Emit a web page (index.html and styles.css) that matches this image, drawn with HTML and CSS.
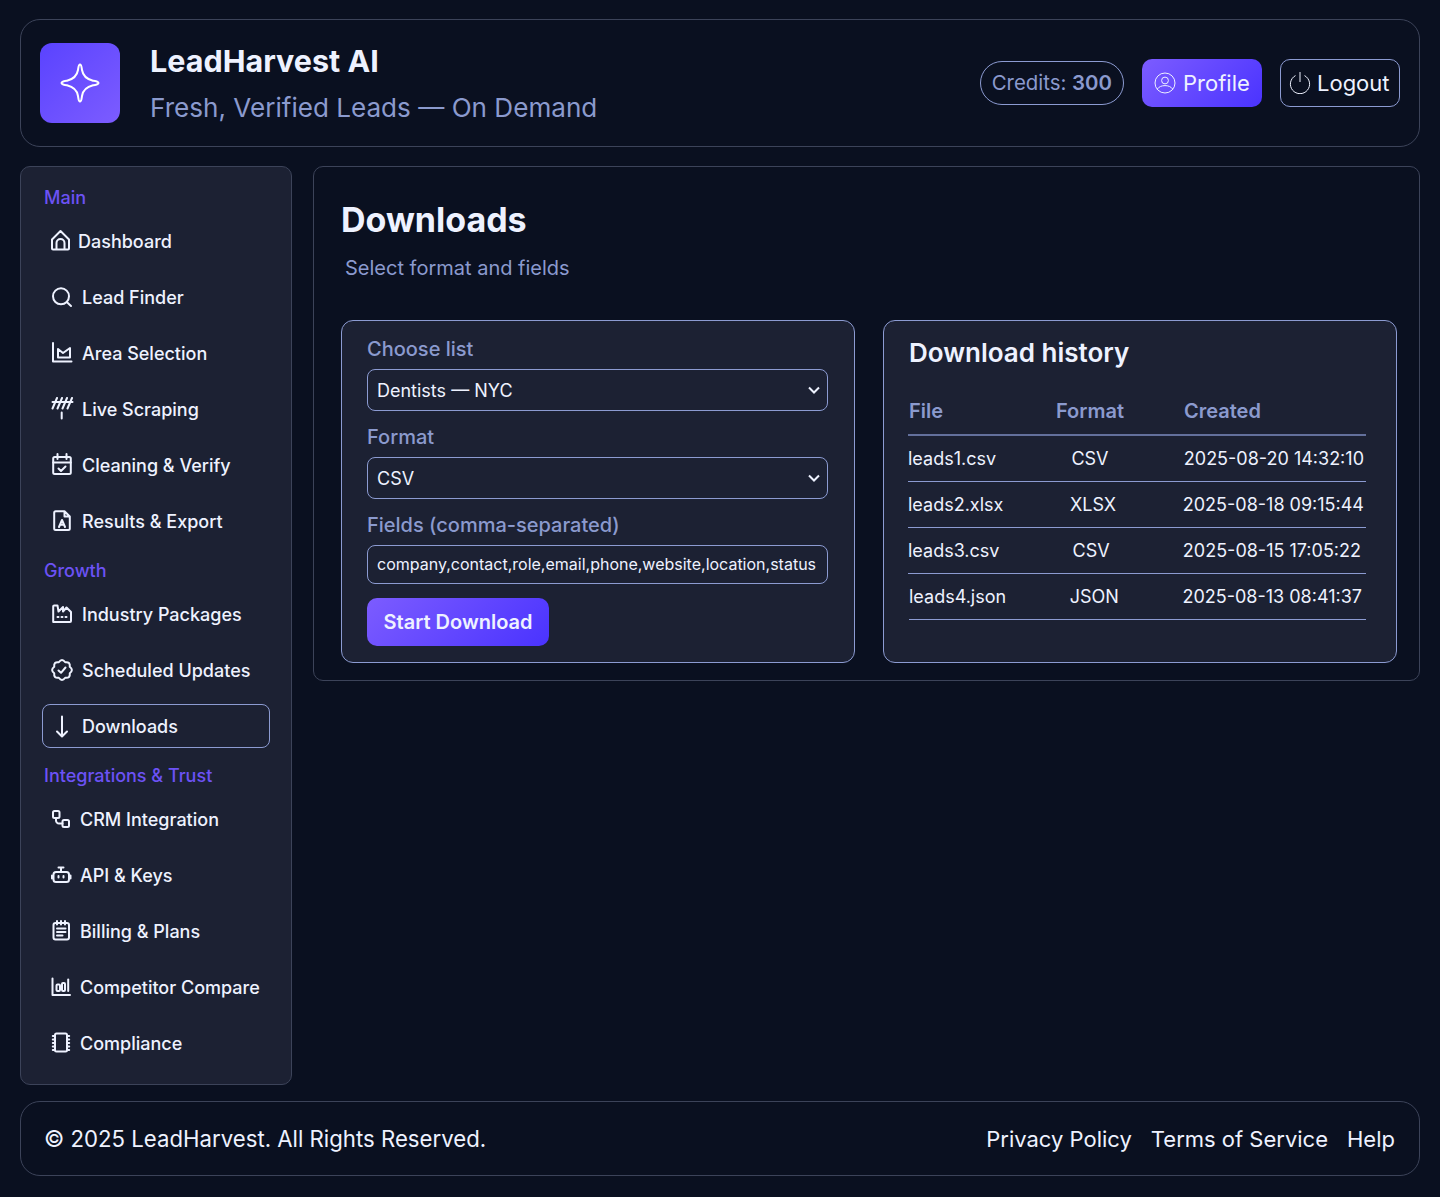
FILE: index.html
```html
<!DOCTYPE html>
<html lang="en">
<head>
  <meta charset="UTF-8" />
  <meta name="viewport" content="width=device-width, initial-scale=1.0"/>
  <title>LeadHarvest AI - Downloads</title>
  <link rel="stylesheet" href="styles.css">
</head>
<body>
  <header class="topbar">
    <div class="brand">
      <div class="logo">
        <svg viewBox="0 0 40 40" width="40" height="40" fill="none" stroke="#fff" stroke-width="2" stroke-linejoin="round">
          <path d="M20 1.5C21.5 1.5 21.5 4 22 7C23 13 26 16 33 17.7C36 18.2 38.5 18.5 38.5 20C38.5 21.5 36 21.8 33 22.3C26 24 23 27 22 33C21.5 36 21.5 38.5 20 38.5C18.5 38.5 18.5 36 18 33C17 27 14 24 7 22.3C4 21.8 1.5 21.5 1.5 20C1.5 18.5 4 18.2 7 17.7C14 16 17 13 18 7C18.5 4 18.5 1.5 20 1.5Z"/>
        </svg>
      </div>
      <div class="brand-text">
        <h1>LeadHarvest AI</h1>
        <p>Fresh, Verified Leads — On Demand</p>
      </div>
    </div>
    <div class="top-actions">
      <span class="credits">Credits: <b>300</b></span>
      <a class="btn btn-primary" href="#">
        <svg viewBox="0 0 22 22" width="22" height="22" fill="none" stroke="currentColor" stroke-width="1">
          <circle cx="11" cy="11" r="10"/>
          <circle cx="11" cy="8.5" r="3.4"/>
          <path d="M3.2 17.2C5 14.6 7.8 13.6 11 13.6s6 1 7.8 3.6"/>
        </svg>
        Profile
      </a>
      <a class="btn btn-outline" href="#">
        <svg viewBox="0 0 22 22" width="22" height="22" fill="none" stroke="currentColor" stroke-width="1">
          <path d="M6.5 3.6A9.6 9.6 0 1 0 15.5 3.6"/>
          <path d="M11 0v10"/>
        </svg>
        Logout
      </a>
    </div>
  </header>

  <div class="layout">
    <nav class="sidebar">
      <div class="nav-label">Main</div>
      <a class="nav-item" href="#">
        <svg class="ico ico-sm" viewBox="0 0 20 24"><path d="M2 10.5L10.5 2L19 10.5V19.5A1 1 0 0 1 18 20.5H3A1 1 0 0 1 2 19.5ZM6.5 20.5V14a4 4 0 0 1 8 0V20.5"/></svg>
        Dashboard
      </a>
      <a class="nav-item" href="#">
        <svg class="ico" viewBox="0 0 24 24"><circle cx="11" cy="11.3" r="8"/><path d="M17 17.3L21 21"/></svg>
        Lead Finder
      </a>
      <a class="nav-item" href="#">
        <svg class="ico" viewBox="0 0 24 24"><path d="M3 2V20.5H21.5M8 16.5V8l5 4 7-5V16.5Z"/></svg>
        Area Selection
      </a>
      <a class="nav-item" href="#">
        <svg class="ico" viewBox="0 0 24 24"><path d="M2.5 11.5L7 1M7.5 11.5L12 1M12.5 11.5L17 1M17.5 11.5L22 1M2.5 5H22.5M11.7 15.5V21.5"/></svg>
        Live Scraping
      </a>
      <a class="nav-item" href="#">
        <svg class="ico" viewBox="0 0 24 24"><rect x="3.2" y="4" width="17.6" height="17" rx="1.5"/><path d="M3.2 9.5H20.8M7.5 1V6M16.5 1V6M8.5 15.5L11 18L15.5 13.5"/></svg>
        Cleaning &amp; Verify
      </a>
      <a class="nav-item" href="#">
        <svg class="ico" viewBox="0 0 24 24"><path d="M4.2 3.7A1.5 1.5 0 0 1 5.7 2.2H14.5L19.8 7.5V19.5A1.5 1.5 0 0 1 18.3 21H5.7A1.5 1.5 0 0 1 4.2 19.5ZM14.5 2.2V7.5H19.8M9 18L12 11L15 18M10 15.8H14"/></svg>
        Results &amp; Export
      </a>

      <div class="nav-label nav-label-next">Growth</div>
      <a class="nav-item" href="#">
        <svg class="ico" viewBox="0 0 24 24"><path d="M3.2 20V4.5A1 1 0 0 1 4.2 3.5H7.5L8.5 9.5L13 5V9.5L16.5 5.5L21 10V19A1 1 0 0 1 20 20ZM7.5 15H8.5M11.5 15H12.5M15.5 15H16.5"/></svg>
        Industry Packages
      </a>
      <a class="nav-item" href="#">
        <svg class="ico" viewBox="0 0 24 24"><path d="M19.76 8.79Q24 12 19.76 15.21Q20.49 20.49 15.21 19.76Q12 24 8.79 19.76Q3.51 20.49 4.24 15.21Q0 12 4.24 8.79Q3.51 3.51 8.79 4.24Q12 0 15.21 4.24Q20.49 3.51 19.76 8.79ZM8.5 12.5L11 14.8L15.5 9.5"/></svg>
        Scheduled Updates
      </a>
      <a class="nav-item active" href="#">
        <svg class="ico" viewBox="0 0 24 24"><path d="M12 2.5V22M7 17.5L12 22.5L17 17.5"/></svg>
        Downloads
      </a>

      <div class="nav-label nav-label-next">Integrations &amp; Trust</div>
      <a class="nav-item" href="#">
        <svg class="ico ico-md" viewBox="0 0 22 22"><rect x="3" y="3" width="6.5" height="7" rx="1.5"/><rect x="12.5" y="12" width="6.5" height="7" rx="1.5"/><path d="M6 10V12.5A3 3 0 0 0 9 15.5H12.5"/></svg>
        CRM Integration
      </a>
      <a class="nav-item" href="#">
        <svg class="ico ico-md" viewBox="0 0 22 22"><rect x="3.5" y="8" width="15.5" height="10" rx="2.5"/><path d="M11 8V4M8.5 3.5H13.5M2 11.5V14.5M20.5 11.5V14.5M8.5 12V13.5M13.5 12V13.5"/></svg>
        API &amp; Keys
      </a>
      <a class="nav-item" href="#">
        <svg class="ico ico-md" viewBox="0 0 22 22"><rect x="3.5" y="3" width="15.5" height="16.5" rx="2"/><path d="M7 1V4.5M11 1V4.5M15 1V4.5M7 8.5H15.5M7 12H15.5M7 15.5H12.5"/></svg>
        Billing &amp; Plans
      </a>
      <a class="nav-item" href="#">
        <svg class="ico ico-md" viewBox="0 0 22 22"><path d="M2.5 2.5V19H20"/><rect x="6.5" y="8.5" width="3.5" height="6.5" rx="1"/><rect x="12" y="7" width="3" height="8" rx="1"/><path d="M18.2 3.5V15"/></svg>
        Competitor Compare
      </a>
      <a class="nav-item" href="#">
        <svg class="ico ico-md" viewBox="0 0 22 22"><rect x="5" y="1.5" width="12" height="18" rx="1.5"/><path d="M2.8 4H5M2.8 7.5H5M2.8 11H5M2.8 14.5H5M2.8 18H5M17 4H19.2M17 7.5H19.2M17 11H19.2M17 14.5H19.2M17 18H19.2"/></svg>
        Compliance
      </a>
    </nav>

    <main class="content">
      <h2>Downloads</h2>
      <p class="subtitle">Select format and fields</p>

      <div class="cards">
        <section class="card card-form">
          <label class="field-label" for="listSelect">Choose list</label>
          <select id="listSelect" class="field field-select">
            <option>Dentists — NYC</option>
          </select>
          <label class="field-label" for="formatSelect">Format</label>
          <select id="formatSelect" class="field field-select">
            <option>CSV</option>
          </select>
          <label class="field-label" for="fieldsInput">Fields (comma-separated)</label>
          <input id="fieldsInput" class="field field-input" type="text" value="company,contact,role,email,phone,website,location,status">
          <button class="start-btn" type="button">Start Download</button>
        </section>

        <section class="card card-history">
          <h3>Download history</h3>
          <div class="history-head">
            <span>File</span>
            <span>Format</span>
            <span>Created</span>
          </div>
          <div class="history-row"><span>leads1.csv</span><span>CSV</span><span>2025-08-20 14:32:10</span></div>
          <div class="history-row"><span>leads2.xlsx</span><span>XLSX</span><span>2025-08-18 09:15:44</span></div>
          <div class="history-row history-short"><span>leads3.csv</span><span>CSV</span><span>2025-08-15 17:05:22</span></div>
          <div class="history-row history-last"><span>leads4.json</span><span>JSON</span><span>2025-08-13 08:41:37</span></div>
        </section>
      </div>
    </main>
  </div>

  <footer class="footer">
    <span>© 2025 LeadHarvest. All Rights Reserved.</span>
    <div class="footer-links">
      <a href="#">Privacy Policy</a>
      <a href="#">Terms of Service</a>
      <a href="#">Help</a>
    </div>
  </footer>
</body>
</html>
```

FILE: styles.css
```css
* {
  margin: 0;
  padding: 0;
  box-sizing: border-box;
}

body {
  font-family: Inter, 'Liberation Sans', sans-serif;
  background: #0a1020;
  color: #eef2ff;
  width: 1440px;
  height: 1197px;
  padding: 19px 20px 21px;
  display: flex;
  flex-direction: column;
}

a {
  color: inherit;
  text-decoration: none;
}

.topbar {
  height: 128px;
  flex-shrink: 0;
  border: 1px solid #3c4359;
  border-radius: 20px;
  padding: 0 19px;
  display: flex;
  align-items: center;
  justify-content: space-between;
}

.brand {
  display: flex;
  align-items: center;
  gap: 30px;
}

.logo {
  width: 80px;
  height: 80px;
  border-radius: 12px;
  background: linear-gradient(135deg, #5a43ff, #7c5cff);
  display: flex;
  align-items: center;
  justify-content: center;
}

.brand-text {
  padding-top: 3px;
}

.brand-text h1 {
  font-size: 30.5px;
  font-weight: 700;
  line-height: 36px;
  margin-bottom: 11px;
}

.brand-text p {
  font-size: 26.1px;
  line-height: 36px;
  color: #8b9ace;
}

.top-actions {
  display: flex;
  align-items: center;
  gap: 18px;
}

.credits {
  height: 44px;
  padding: 0 11px;
  border: 1px solid #8c9bd2;
  border-radius: 22px;
  font-size: 20.4px;
  line-height: 42px;
  color: #8b9ace;
}

.credits b {
  font-weight: 600;
}

.btn {
  height: 48px;
  width: 120px;
  border-radius: 10px;
  font-size: 22px;
  display: flex;
  align-items: center;
  gap: 7px;
}

.btn-primary {
  padding: 0 12px;
  background: linear-gradient(135deg, #7c5cff, #4a33ff);
}

.btn-outline {
  padding: 0 8px;
  gap: 6px;
  border: 1px solid #8c9bd2;
}

.layout {
  flex: 1;
  margin-top: 19px;
  display: flex;
  align-items: flex-start;
  gap: 21px;
}

.sidebar {
  width: 272px;
  height: 919px;
  flex-shrink: 0;
  background: #1c2133;
  border: 1px solid #3c4359;
  border-radius: 10px;
  padding: 17px 21px;
  display: flex;
  flex-direction: column;
  gap: 12px;
}

.nav-label {
  font-size: 18px;
  font-weight: 500;
  line-height: 28px;
  height: 28px;
  padding-left: 2px;
  margin-bottom: -5px;
  color: #6c52f5;
}

.nav-label-next {
  margin-top: 2px;
}

.nav-item {
  height: 44px;
  flex-shrink: 0;
  border: 1px solid transparent;
  border-radius: 8px;
  padding: 0 7px;
  display: flex;
  align-items: center;
  gap: 8px;
  font-size: 18px;
  font-weight: 500;
  white-space: nowrap;
}

.nav-item.active {
  border-color: #8c9bd2;
}

.ico {
  width: 24px;
  height: 24px;
  flex-shrink: 0;
  fill: none;
  stroke: #eef2ff;
  stroke-width: 2;
  stroke-linejoin: round;
  stroke-linecap: round;
}

.ico-sm {
  width: 20px;
}

.ico-md {
  width: 22px;
  height: 22px;
}

.content {
  flex: 1;
  height: 515px;
  border: 1px solid #3c4359;
  border-radius: 10px;
  padding: 27px 22px 17px 27px;
}

.content h2 {
  font-size: 34px;
  font-weight: 700;
  line-height: 52px;
}

.subtitle {
  font-size: 20px;
  line-height: 30px;
  padding-left: 4px;
  margin-top: 7px;
  color: #8b9ace;
}

.cards {
  margin-top: 37px;
  display: flex;
  gap: 28px;
}

.card {
  width: 514px;
  height: 343px;
  background: #1c2133;
  border: 1px solid #8c9bd2;
  border-radius: 12px;
}

.card-form {
  padding: 14px 25px;
  display: flex;
  flex-direction: column;
  align-items: flex-start;
}

.field-label {
  font-size: 20px;
  font-weight: 500;
  line-height: 28px;
  margin-bottom: 6px;
  color: #8b9ace;
}

.field {
  width: 461px;
  background: #1c2133;
  color: #eef2ff;
  border: 1px solid #8c9bd2;
  border-radius: 8px;
  font-family: inherit;
}

.field-select {
  height: 42px;
  padding: 0 9px;
  margin-bottom: 12px;
  font-size: 18px;
  appearance: none;
  background-image: url("data:image/svg+xml,%3Csvg xmlns='http://www.w3.org/2000/svg' width='12' height='8'%3E%3Cpath d='M1 1.5L6 6.5L11 1.5' fill='none' stroke='%23eef2ff' stroke-width='2'/%3E%3C/svg%3E");
  background-repeat: no-repeat;
  background-position: right 7px center;
}

.field-input {
  height: 39px;
  padding: 0 9px 2px;
  font-size: 16px;
}

.start-btn {
  width: 182px;
  height: 48px;
  margin-top: 14px;
  border: none;
  border-radius: 10px;
  background: linear-gradient(135deg, #7c5cff, #4a33ff);
  color: #eef2ff;
  font-family: inherit;
  font-size: 20px;
  font-weight: 600;
  cursor: pointer;
}

.card-history {
  padding: 12px 30px 0 24px;
}

.card-history h3 {
  font-size: 26px;
  font-weight: 600;
  line-height: 40px;
  margin-left: 1px;
}

.history-head {
  display: grid;
  grid-template-columns: 147px 128px 1fr;
  height: 48px;
  margin-top: 15px;
  padding-left: 1px;
  align-items: center;
  border-bottom: 2px solid #63709c;
  font-size: 20px;
  font-weight: 600;
  color: #8b9ace;
}

.history-row {
  height: 46px;
  padding-right: 2px;
  display: flex;
  align-items: center;
  justify-content: space-between;
  border-bottom: 1px solid #8c9bd2;
  font-size: 18px;
}

.history-short {
  padding-right: 5px;
}

.history-last {
  margin-left: 1px;
  padding-right: 4px;
}

.footer {
  height: 75px;
  flex-shrink: 0;
  margin-top: 16px;
  border: 1px solid #3c4359;
  border-radius: 20px;
  padding: 0 24px 0 23px;
  display: flex;
  align-items: center;
  justify-content: space-between;
  font-size: 22.2px;
}

.footer-links {
  display: flex;
  gap: 19px;
  font-size: 22px;
}
```
